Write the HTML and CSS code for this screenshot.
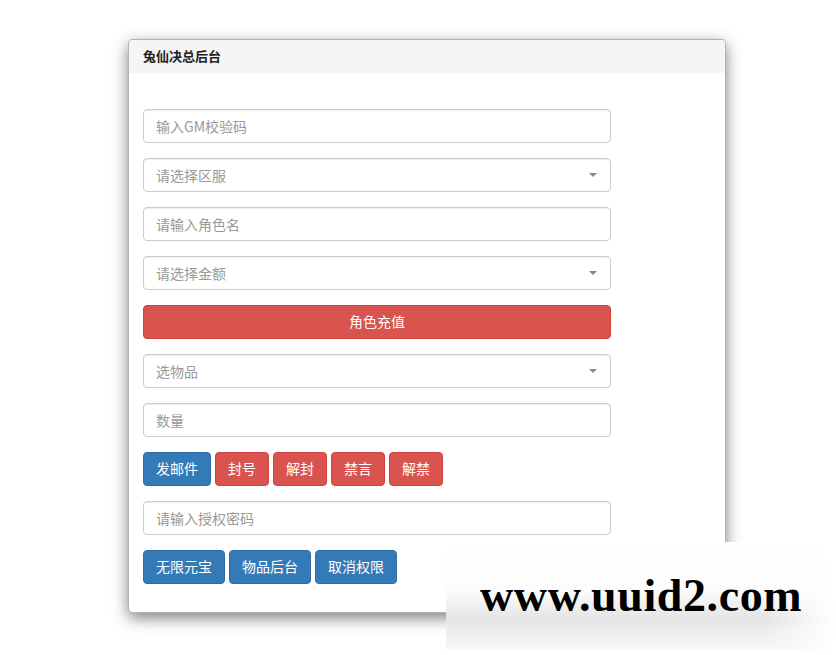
FILE: index.html
```html
<!DOCTYPE html>
<html lang="zh-CN">
<head>
<meta charset="utf-8">
<title>兔仙决总后台</title>
<link rel="stylesheet" href="styles.css">
</head>
<body>
<div class="panel">
  <div class="panel-heading">兔仙决总后台</div>
  <div class="panel-body">
    <div class="field"><input class="control" type="text" placeholder="输入GM校验码"></div>
    <div class="field"><div class="control select"><span class="ph">请选择区服</span><span class="caret"></span></div></div>
    <div class="field"><input class="control" type="text" placeholder="请输入角色名"></div>
    <div class="field"><div class="control select"><span class="ph">请选择金额</span><span class="caret"></span></div></div>
    <div class="field"><button class="btn btn-danger btn-block">角色充值</button></div>
    <div class="field"><div class="control select"><span class="ph">选物品</span><span class="caret"></span></div></div>
    <div class="field"><input class="control" type="text" placeholder="数量"></div>
    <div class="field btn-row">
      <button class="btn btn-primary">发邮件</button>
      <button class="btn btn-danger">封号</button>
      <button class="btn btn-danger">解封</button>
      <button class="btn btn-danger">禁言</button>
      <button class="btn btn-danger">解禁</button>
    </div>
    <div class="field"><input class="control" type="password" placeholder="请输入授权密码"></div>
    <div class="btn-row">
      <button class="btn btn-primary">无限元宝</button>
      <button class="btn btn-primary">物品后台</button>
      <button class="btn btn-primary">取消权限</button>
    </div>
  </div>
</div>
<div class="watermark"><span>www.uuid2.com</span></div>
</body>
</html>
```
FILE: styles.css
```css
* { box-sizing: border-box; }
html, body { margin: 0; padding: 0; background: #fff; }
body {
  font-family: "Noto Sans CJK SC", "Microsoft YaHei", sans-serif;
  font-size: 14px;
  color: #333;
  width: 836px;
  height: 655px;
  overflow: hidden;
  position: relative;
}
.panel {
  margin: 39px 0 0 128px;
  width: 598px;
  background: #fff;
  border: 1px solid rgba(0,0,0,.3);
  border-radius: 5px;
  box-shadow: 0 5px 15px rgba(0,0,0,.5);
  overflow: hidden;
}
.panel-heading {
  background: #f5f5f5;
  height: 33px;
  line-height: 32px;
  padding: 0 14px;
  font-size: 13px;
  font-weight: bold;
  color: #222;
}
.panel-body {
  padding: 36px 14px 28px;
}
.field { margin-bottom: 15px; width: 468px; }
.control {
  display: flex;
  align-items: center;
  width: 468px;
  height: 34px;
  padding: 0 12px 1px;
  border: 1px solid #ccc;
  border-radius: 4px;
  background: #fff;
  box-shadow: inset 0 1px 1px rgba(0,0,0,.075);
  font-family: inherit;
  font-size: 14px;
  color: #555;
  outline: none;
}
.control::placeholder { color: #999; }
.select { justify-content: space-between; }
.select .ph { color: #999; }
.caret {
  width: 0; height: 0;
  border-left: 4px solid transparent;
  border-right: 4px solid transparent;
  border-top: 4px solid #888;
  margin-right: 1px;
}
.btn-row { display: flex; gap: 4px; }
.btn {
  height: 34px;
  padding: 0 12px 1px;
  border: 1px solid transparent;
  border-radius: 4px;
  font-family: inherit;
  font-size: 14px;
  color: #fff;
  line-height: 31px;
  cursor: pointer;
}
.btn-block { width: 100%; display: block; }
.btn-primary { background: #337ab7; border-color: #2e6da4; }
.btn-danger { background: #d9534f; border-color: #d43f3a; }
.watermark {
  position: absolute;
  left: 446px;
  top: 542px;
  width: 390px;
  height: 108px;
  background: linear-gradient(180deg, #fff 0%, #fcfcfc 45%, #e4e4e4 72%, #eee 82%, #f7f7f7 100%);
  padding: 31px 0 0 34px;
}
.watermark::after {
  content: "";
  position: absolute;
  right: 0; top: 0; bottom: 0;
  width: 70px;
  background: linear-gradient(90deg, rgba(255,255,255,0), #fff);
}
.watermark span {
  font-family: "Liberation Serif", "DejaVu Serif", serif;
  font-weight: bold;
  font-size: 46px;
  line-height: 46px;
  color: #000;
  position: relative;
  z-index: 1;
  letter-spacing: 0.6px;
}
```
